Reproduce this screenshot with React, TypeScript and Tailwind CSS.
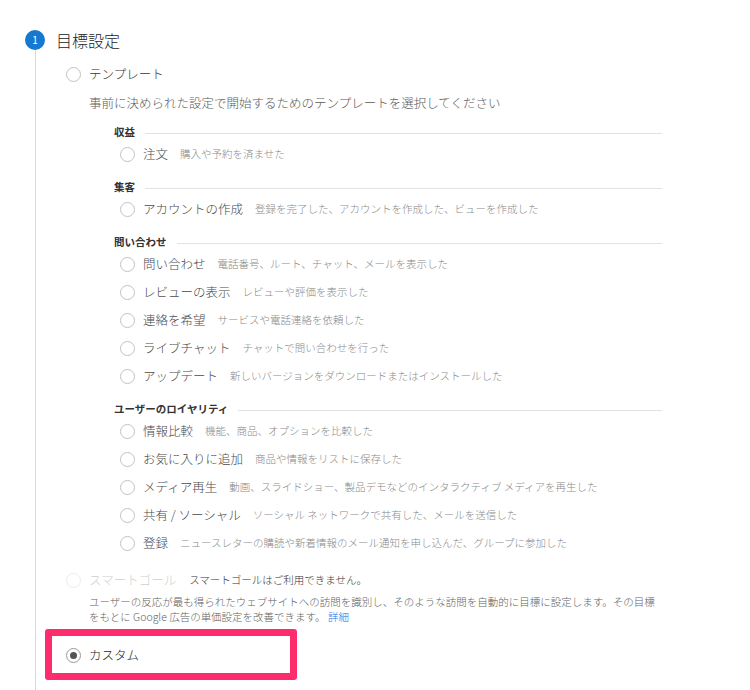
import React from "react";

type Option = { label: string; desc: string };
type Category = { title: string; options: Option[] };

const CATEGORIES: Category[] = [
  { title: "収益", options: [{ label: "注文", desc: "購入や予約を済ませた" }] },
  {
    title: "集客",
    options: [
      {
        label: "アカウントの作成",
        desc: "登録を完了した、アカウントを作成した、ビューを作成した",
      },
    ],
  },
  {
    title: "問い合わせ",
    options: [
      { label: "問い合わせ", desc: "電話番号、ルート、チャット、メールを表示した" },
      { label: "レビューの表示", desc: "レビューや評価を表示した" },
      { label: "連絡を希望", desc: "サービスや電話連絡を依頼した" },
      { label: "ライブチャット", desc: "チャットで問い合わせを行った" },
      {
        label: "アップデート",
        desc: "新しいバージョンをダウンロードまたはインストールした",
      },
    ],
  },
  {
    title: "ユーザーのロイヤリティ",
    options: [
      { label: "情報比較", desc: "機能、商品、オプションを比較した" },
      { label: "お気に入りに追加", desc: "商品や情報をリストに保存した" },
      {
        label: "メディア再生",
        desc: "動画、スライドショー、製品デモなどのインタラクティブ メディアを再生した",
      },
      {
        label: "共有 / ソーシャル",
        desc: "ソーシャル ネットワークで共有した、メールを送信した",
      },
      {
        label: "登録",
        desc: "ニュースレターの購読や新着情報のメール通知を申し込んだ、グループに参加した",
      },
    ],
  },
];

const Radio = ({
  checked = false,
  disabled = false,
}: {
  checked?: boolean;
  disabled?: boolean;
}) => (
  <span
    className={`flex h-[15px] w-[15px] shrink-0 items-center justify-center rounded-full border bg-white ${
      disabled
        ? "border-[#ececec]"
        : checked
          ? "border-[#9a9a9a]"
          : "border-[#c2c2c2]"
    }`}
  >
    {checked && <span className="h-[7px] w-[7px] rounded-full bg-[#555]" />}
  </span>
);

export default function App() {
  return (
    <div
      className="h-[690px] overflow-hidden bg-white pl-[25px] pt-[30px] font-light text-[#333]"
      style={{ fontFamily: '"Noto Sans CJK JP", "Noto Sans", sans-serif' }}
    >
      {/* step header */}
      <div className="flex h-[20px] items-center">
        <span className="flex h-[20px] w-[20px] items-center justify-center rounded-full bg-[#1479cf] text-[10px] font-normal leading-none text-white">
          1
        </span>
        <span className="ml-[11px] text-[16px] leading-none text-[#222]">
          目標設定
        </span>
      </div>

      <div className="flex">
        <div className="w-[20px] shrink-0">
          <div className="ml-[10px] h-full w-px bg-[#d9d9d9]" />
        </div>

        <div className="flex flex-col pb-[10px] pt-[10px]">
          {/* template */}
          <div className="flex h-[28px] items-center pl-[21px]">
            <Radio />
            <span className="ml-[8px] text-[12.5px] text-[#333]">テンプレート</span>
          </div>
          <div className="mt-[7px] pl-[44px] text-[12.5px] leading-[16px] text-[#5a5a5a]">
            事前に決められた設定で開始するためのテンプレートを選択してください
          </div>

          <div className="mt-[13px] flex w-[617px] flex-col gap-[11px] pl-[69px]">
            {CATEGORIES.map((cat) => (
              <div key={cat.title} className="flex flex-col">
                <div className="flex h-[16px] items-center">
                  <span className="text-[10.5px] font-bold leading-none text-[#333]">
                    {cat.title}
                  </span>
                  <span className="ml-[10px] mt-[3px] h-px flex-1 bg-[#e2e2e2]" />
                </div>
                {cat.options.map((opt) => (
                  <div key={opt.label} className="flex h-[28px] items-center pl-[6px]">
                    <Radio />
                    <span className="ml-[8px] text-[12.5px] text-[#4a4a4a]">
                      {opt.label}
                    </span>
                    <span className="ml-[12px] text-[10.5px] text-[#8a8a8a]">
                      {opt.desc}
                    </span>
                  </div>
                ))}
              </div>
            ))}
          </div>

          {/* smart goal */}
          <div className="mt-[9px] flex h-[28px] items-center pl-[21px]">
            <Radio disabled />
            <span className="ml-[8px] text-[12.5px] text-[#cfcfcf]">スマートゴール</span>
            <span className="ml-[13px] text-[10.5px] text-[#333]">
              スマートゴールはご利用できません。
            </span>
          </div>
          <p className="w-[620px] pl-[44px] text-[10.5px] leading-[15px] text-[#5f5f5f]">
            ユーザーの反応が最も得られたウェブサイトへの訪問を識別し、そのような訪問を自動的に目標に設定します。その目標
            <br />
            をもとに Google 広告の単価設定を改善できます。{" "}
            <span className="text-[#1a73e8]">詳細</span>
          </p>

          {/* custom, highlighted */}
          <div className="mt-[5px] flex h-[51px] w-[252px] items-center rounded-[3px] border-[7px] border-[#fe2c6c] pl-[14px] pt-[2px]">
            <Radio checked />
            <span className="ml-[8px] text-[12.5px] text-[#222]">カスタム</span>
          </div>
        </div>
      </div>
    </div>
  );
}
